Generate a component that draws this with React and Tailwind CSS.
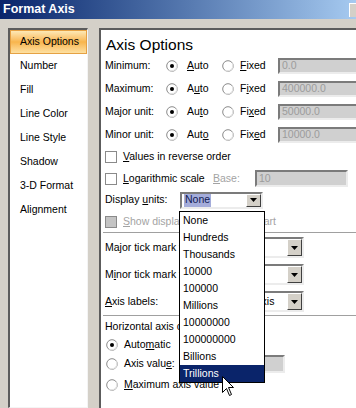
import React from 'react';

const sunken =
  'border-2 border-t-[#7b7b7b] border-l-[#7b7b7b] border-r-[#ececec] border-b-[#ececec]';

function Radio({ checked }) {
  return (
    <svg width="12" height="12" viewBox="0 0 12 12" className="shrink-0">
      <circle cx="6" cy="6" r="5.3" fill="#fff" stroke="#8a8a8a" strokeWidth="1" />
      <path d="M10.2 3.4 A5 5 0 0 1 3.4 10.2" fill="none" stroke="#e4e4e4" strokeWidth="1.2" />
      {checked && <circle cx="6" cy="6" r="2" fill="#000" />}
    </svg>
  );
}

function Check({ disabled }) {
  return (
    <div
      className={`w-[12px] h-[12px] shrink-0 border border-[#8a8a8a] ${
        disabled ? 'bg-[#c4c4c4]' : 'bg-white'
      }`}
    />
  );
}

function Arrow() {
  return (
    <div className="w-[15px] h-full shrink-0 bg-[#d4d0c8] border border-t-white border-l-white border-r-[#404040] border-b-[#404040] flex items-center justify-center">
      <svg width="7" height="4" viewBox="0 0 7 4">
        <path d="M0 0 H7 L3.5 4 Z" fill="#000" />
      </svg>
    </div>
  );
}

function Combo({ className, children }) {
  return (
    <div className={`${sunken} bg-white flex items-stretch ${className}`}>
      <div className="flex-1 flex items-center pl-[2px] overflow-hidden whitespace-nowrap">{children}</div>
      <Arrow />
    </div>
  );
}

function Field({ className, value }) {
  return (
    <div className={`${sunken} bg-[#d0d0d0] flex items-center pl-[2px] text-[#9c9c9c] ${className}`}>
      {value}
    </div>
  );
}

function U({ children }) {
  return <span className="underline">{children}</span>;
}

function UnitRow({ label, auto, fixed, value }) {
  return (
    <div className="flex items-center h-[23px] pl-[4px]">
      <span className="w-[61px]">{label}</span>
      <Radio checked />
      <span className="w-[35px] ml-[9px]">{auto}</span>
      <Radio />
      <span className="w-[38px] ml-[6px]">{fixed}</span>
      <Field className="w-[100px] h-[16px]" value={value} />
    </div>
  );
}

const sections = ['Number', 'Fill', 'Line Color', 'Line Style', 'Shadow', '3-D Format', 'Alignment'];
const units = ['None', 'Hundreds', 'Thousands', '10000', '100000', 'Millions', '10000000', '100000000', 'Billions'];

export default function App() {
  return (
    <div className="w-[356px] h-[408px] overflow-hidden relative bg-[#d4d0c8] text-black text-[10.5px] font-['Liberation_Sans',Arial,sans-serif]">
      {/* Title bar */}
      <div className="h-[19px] flex items-center bg-linear-to-r from-[#0a246a] to-[#a6caf0] pl-[3px]">
        <span className="text-white font-bold text-[12.5px]">Format Axis</span>
        <div className="ml-auto mr-[-9px] w-[16px] h-[14px] bg-[#d4d0c8] border-l border-t border-white" />
      </div>

      <div className="flex pt-[9px] pl-[8px] gap-[11px]">
        {/* Section list */}
        <div className="w-[80px] h-[380px] shrink-0 bg-white border-t-2 border-l-2 border-t-[#5c5c5c] border-l-[#5c5c5c] border-r border-b border-r-[#f4f4f4] border-b-[#f4f4f4]">
          <div className="h-[24px] flex items-center pl-[9px] border border-[#e5a144] bg-linear-to-b from-[#fde8b4] via-[#f8b54c] to-[#fde0a0]">
            Axis Options
          </div>
          {sections.map((s) => (
            <div key={s} className="h-[24px] flex items-center pl-[10px]">
              {s}
            </div>
          ))}
        </div>

        {/* Options panel */}
        <div className="w-[280px] h-[381px] shrink-0 bg-white border-t-2 border-l-2 border-t-[#5c5c5c] border-l-[#5c5c5c] pt-[6px]">
          <div className="h-[18px] leading-[18px] pl-[5px] text-[15.5px]">Axis Options</div>

          <UnitRow label="Minimum:" auto={<><U>A</U>uto</>} fixed={<><U>F</U>ixed</>} value="0.0" />
          <UnitRow label="Maximum:" auto={<>A<U>u</U>to</>} fixed={<>F<U>i</U>xed</>} value="400000.0" />
          <UnitRow label="Major unit:" auto={<>Au<U>t</U>o</>} fixed={<>Fi<U>x</U>ed</>} value="50000.0" />
          <UnitRow label="Minor unit:" auto={<>Aut<U>o</U></>} fixed={<>Fix<U>e</U>d</>} value="10000.0" />

          <div className="flex items-center h-[22px] pl-[4px] gap-[6px]">
            <Check />
            <span>
              <U>V</U>alues in reverse order
            </span>
          </div>
          <div className="flex items-center h-[21px] pl-[4px]">
            <Check />
            <span className="w-[90px] ml-[6px]">
              <U>L</U>ogarithmic scale
            </span>
            <span className="w-[42px] text-[#a3a3a3]">
              <U>B</U>ase:
            </span>
            <Field className="w-[93px] h-[17px]" value="10" />
          </div>
          <div className="flex items-center h-[22px] pl-[4px]">
            <span className="w-[75px]">
              Display <U>u</U>nits:
            </span>
            <Combo className="w-[83px] h-[17px]">
              <span className="bg-[#a4acda] text-[#0f1a52] px-[1px]">None</span>
            </Combo>
          </div>
          <div className="flex items-center h-[21px] pl-[4px] gap-[6px] text-[#a3a3a3]">
            <Check disabled />
            <span className="whitespace-nowrap">
              <U>S</U>how display units label on chart
            </span>
          </div>

          <div className="h-[2px] ml-[2px] border-t border-t-[#a0a0a0] border-b border-b-white" />

          <div className="flex items-center h-[27px] pl-[4px]">
            <span className="w-[110px] whitespace-nowrap overflow-hidden">
              Ma<U>j</U>or tick mark type:
            </span>
            <Combo className="w-[89px] h-[21px]">None</Combo>
          </div>
          <div className="flex items-center h-[27px] pl-[4px]">
            <span className="w-[110px] whitespace-nowrap overflow-hidden">
              M<U>i</U>nor tick mark type:
            </span>
            <Combo className="w-[89px] h-[21px]">None</Combo>
          </div>
          <div className="flex items-center h-[27px] pl-[4px]">
            <span className="w-[110px]">
              <U>A</U>xis labels:
            </span>
            <Combo className="w-[89px] h-[21px]">Next to Axis</Combo>
          </div>

          <div className="h-[2px] ml-[2px] border-t border-t-[#a0a0a0] border-b border-b-white" />

          <div className="flex items-center h-[19px] pl-[4px] whitespace-nowrap">Horizontal axis crosses:</div>
          <div className="flex items-center h-[18px] pl-[5px] gap-[6px]">
            <Radio checked />
            <span>
              Auto<U>m</U>atic
            </span>
          </div>
          <div className="flex items-center h-[20px] pl-[5px]">
            <Radio />
            <span className="w-[78px] ml-[6px]">
              Axis valu<U>e</U>:
            </span>
            <Field className="w-[83px] h-[18px]" value="0.0" />
          </div>
          <div className="flex items-center h-[21px] pl-[5px] gap-[6px]">
            <Radio />
            <span>
              <U>M</U>aximum axis value
            </span>
          </div>
        </div>
      </div>

      {/* Open drop-down list */}
      <div className="absolute left-[179px] top-[211px] w-[86px] bg-white border border-black">
        {units.map((u) => (
          <div key={u} className="h-[17px] flex items-center pl-[3px]">
            {u}
          </div>
        ))}
        <div className="h-[17px] flex items-center pl-[3px] bg-[#0a246a] text-white">Trillions</div>
      </div>

      {/* Mouse pointer */}
      <svg className="absolute left-[222px] top-[376px]" width="13" height="21" viewBox="0 0 13 21">
        <path
          d="M0.5 0.5 L0.5 16.5 L4.5 12.5 L7.5 19.5 L9.5 18.5 L6.5 11.5 L11.5 11.5 Z"
          fill="#fff"
          stroke="#000"
          strokeWidth="1"
          strokeLinejoin="miter"
        />
      </svg>
    </div>
  );
}
